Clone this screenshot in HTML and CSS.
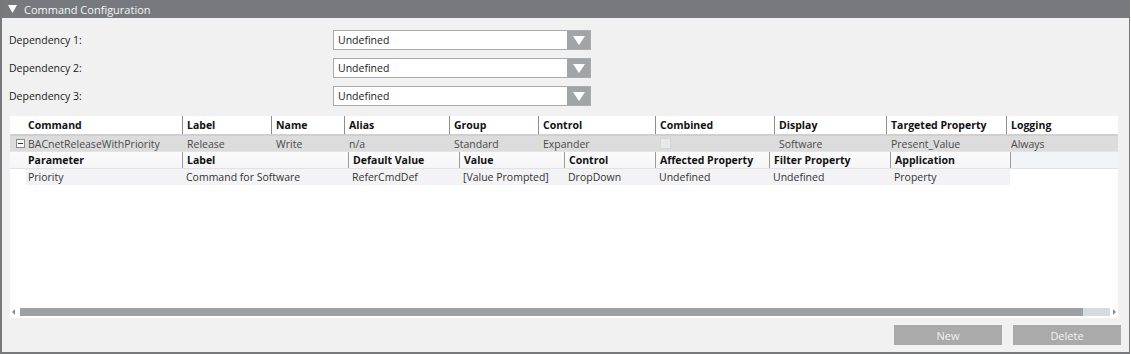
FILE: index.html
```html
<!DOCTYPE html>
<html>
<head>
<meta charset="utf-8">
<link rel="stylesheet" href="styles.css">
</head>
<body>
<div class="panel">
  <div class="titlebar"><span class="tri"><svg width="9" height="8" viewBox="0 0 9 8"><polygon points="0,0 9,0 4.5,8" fill="#fff"/></svg></span><span class="title">Command Configuration</span></div>
  <div class="content">
    <div class="deps">
      <div class="dep"><span class="dep-label">Dependency 1:</span><div class="select"><span class="sel-text">Undefined</span><span class="sel-btn"><svg width="12" height="9" viewBox="0 0 12 9"><polygon points="0,0 12,0 6,9" fill="#fff"/></svg></span></div></div>
      <div class="dep"><span class="dep-label">Dependency 2:</span><div class="select"><span class="sel-text">Undefined</span><span class="sel-btn"><svg width="12" height="9" viewBox="0 0 12 9"><polygon points="0,0 12,0 6,9" fill="#fff"/></svg></span></div></div>
      <div class="dep"><span class="dep-label">Dependency 3:</span><div class="select"><span class="sel-text">Undefined</span><span class="sel-btn"><svg width="12" height="9" viewBox="0 0 12 9"><polygon points="0,0 12,0 6,9" fill="#fff"/></svg></span></div></div>
    </div>
    <div class="grid-box">
      <div class="rows">
        <div class="row main head">
          <div></div>
          <div class="c first">Command</div>
          <div class="c">Label</div>
          <div class="c">Name</div>
          <div class="c">Alias</div>
          <div class="c">Group</div>
          <div class="c">Control</div>
          <div class="c">Combined</div>
          <div class="c">Display</div>
          <div class="c">Targeted Property</div>
          <div class="c">Logging</div>
        </div>
        <div class="row main data">
          <div class="exp"><span class="minus"></span></div>
          <div class="c first">BACnetReleaseWithPriority</div>
          <div class="c">Release</div>
          <div class="c">Write</div>
          <div class="c">n/a</div>
          <div class="c">Standard</div>
          <div class="c">Expander</div>
          <div class="c"><span class="chk"></span></div>
          <div class="c">Software</div>
          <div class="c">Present_Value</div>
          <div class="c">Always</div>
        </div>
        <div class="row sub head">
          <div></div>
          <div class="c first">Parameter</div>
          <div class="c">Label</div>
          <div class="c">Default Value</div>
          <div class="c">Value</div>
          <div class="c">Control</div>
          <div class="c">Affected Property</div>
          <div class="c">Filter Property</div>
          <div class="c">Application</div>
          <div class="c end"></div>
        </div>
        <div class="row sub data">
          <div class="blank"></div>
          <div class="c first">Priority</div>
          <div class="c">Command for Software</div>
          <div class="c">ReferCmdDef</div>
          <div class="c">[Value Prompted]</div>
          <div class="c">DropDown</div>
          <div class="c">Undefined</div>
          <div class="c">Undefined</div>
          <div class="c">Property</div>
          <div class="c end"></div>
        </div>
      </div>
      <div class="hscroll">
        <span class="arr left"></span>
        <div class="track"><div class="thumb"></div></div>
        <span class="arr right"></span>
      </div>
    </div>
    <div class="buttons">
      <button class="btn">New</button>
      <button class="btn">Delete</button>
    </div>
  </div>
</div>
</body>
</html>
```
FILE: styles.css
```css
* { box-sizing: border-box; }
html, body { margin: 0; padding: 0; background: #fff; }
body { font-family: "Open Sans", "Noto Sans", sans-serif; font-size: 10.5px; color: #1a1a1a; }
.panel {
  width: 1130px; height: 354px;
  background: #f1f1f1;
  border-left: 2px solid #76797c;
  border-right: 1px solid #76797c;
  border-bottom: 2px solid #76797c;
  display: flex; flex-direction: column;
}
.titlebar {
  height: 18px; background: #767a7e; color: #f4f6f8;
  display: flex; align-items: center; padding-left: 6px;
  font-size: 11px;
}
.tri { width: 16px; display: flex; align-items: center; }
.content { flex: 1; display: flex; flex-direction: column; padding: 12px 0 0 7px; }
.deps { display: flex; flex-direction: column; gap: 8px; }
.dep { display: flex; align-items: center; height: 20px; }
.dep-label { width: 324px; }
.select {
  width: 258px; height: 20px; background: #fff; border: 1px solid #a9abad;
  display: flex; align-items: center; justify-content: space-between;
}
.sel-text { padding-left: 4px; }
.sel-btn { width: 23px; height: 18px; background: #a2a5a8; display: flex; align-items: center; justify-content: center; }
.grid-box {
  margin-top: 10px; margin-left: 1px; width: 1108px; height: 202px;
  background: #fff; display: flex; flex-direction: column;
}
.rows { flex: 1; padding-top: 0; }
.row { display: grid; height: 17px; align-items: center; }
.main { grid-template-columns: 16px 156px 89px 73px 105px 89px 117px 119px 112px 120px 112px; }
.sub { grid-template-columns: 16px 156px 166px 111px 105px 91px 114px 121px 120px 108px; }
.row .c { padding-left: 4px; white-space: nowrap; height: 100%; display: flex; align-items: center; }
.row .c.first { padding-left: 2px; }
.head { font-weight: bold; color: #111; }
.head .c:not(.first) { border-left: 1px solid #8c8c8c; }
.main.head { background: #fff; height: 18px; }
.main.data { background: #dcdcdc; border-top: 2px solid #cfcfcf; color: #4a4a4a; }
.main.data .c { padding-left: 5px; }
.main.data .c.first { padding-left: 2px; }
.sub.head { border-top: 1px solid #e4e4e6; background: linear-gradient(#fbfbfc, #f5f5f7); }
.sub.head .c { border-left-color: #9a9a9a; }
.sub.head .c.end { background: #f3f4f6; }
.sub.data { background: #f3f3f5; border-top: 1px solid #e2e2e4; color: #333; }
.sub.data .blank { background: #fff; height: 100%; }
.sub.data .c.end { background: #fff; }
.exp { display: flex; align-items: center; justify-content: center; height: 100%; padding-left: 4px; }
.minus {
  width: 9px; height: 9px; border: 1px solid #8a8a8a; background: #fafafa; position: relative;
}
.minus::after { content: ""; position: absolute; left: 1px; right: 1px; top: 3px; height: 1px; background: #333; }
.chk { width: 11px; height: 11px; background: #e9e9e9; border: 1px solid #d6d6d6; }
.hscroll { height: 10px; display: flex; align-items: center; padding: 0 2px; margin-bottom: 1px; }
.arr { width: 0; height: 0; border-top: 3px solid transparent; border-bottom: 3px solid transparent; }
.arr.left { border-right: 3px solid #8b8f92; margin-right: 5px; }
.arr.right { border-left: 3px solid #8b8f92; margin-left: 3px; }
.track { flex: 1; height: 8px; background: #d3dcde; }
.thumb { width: 1063px; height: 8px; background: #9da1a4; }
.buttons { display: flex; justify-content: flex-end; gap: 11px; padding: 7px 8px 0 0; }
.btn {
  width: 108px; height: 20px; border: 0; background: #aaaaaa; color: #f2f2f2;
  font-family: "Open Sans", "Noto Sans", sans-serif; font-size: 11px; padding: 0;
}
```
